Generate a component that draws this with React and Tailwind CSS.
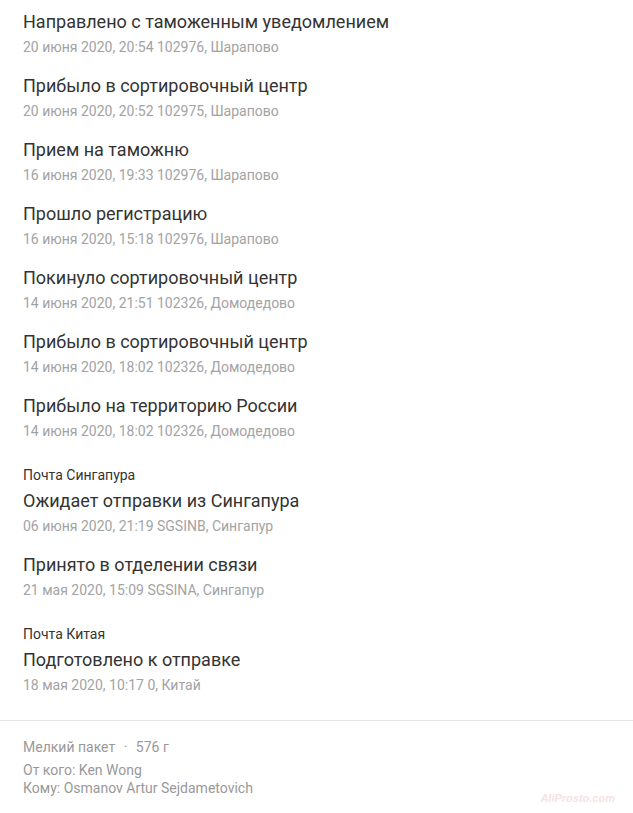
const groups = [
  {
    carrier: null,
    events: [
      { title: "Направлено с таможенным уведомлением", meta: "20 июня 2020, 20:54 102976, Шарапово" },
      { title: "Прибыло в сортировочный центр", meta: "20 июня 2020, 20:52 102975, Шарапово" },
      { title: "Прием на таможню", meta: "16 июня 2020, 19:33 102976, Шарапово" },
      { title: "Прошло регистрацию", meta: "16 июня 2020, 15:18 102976, Шарапово" },
      { title: "Покинуло сортировочный центр", meta: "14 июня 2020, 21:51 102326, Домодедово" },
      { title: "Прибыло в сортировочный центр", meta: "14 июня 2020, 18:02 102326, Домодедово" },
      { title: "Прибыло на территорию России", meta: "14 июня 2020, 18:02 102326, Домодедово" },
    ],
  },
  {
    carrier: "Почта Сингапура",
    events: [
      { title: "Ожидает отправки из Сингапура", meta: "06 июня 2020, 21:19 SGSINB, Сингапур" },
      { title: "Принято в отделении связи", meta: "21 мая 2020, 15:09 SGSINA, Сингапур" },
    ],
  },
  {
    carrier: "Почта Китая",
    events: [
      { title: "Подготовлено к отправке", meta: "18 мая 2020, 10:17 0, Китай" },
    ],
  },
];

export default function App() {
  return (
    <div className="relative min-h-[813px] w-[633px] bg-white font-['Roboto',sans-serif]">
      {/* Tracking history */}
      <div className="px-[23px] pt-[10px]">
        {groups.map((group, gi) => (
          <div key={gi} className={gi > 0 ? "mt-[25px]" : ""}>
            {group.carrier && (
              <p className="text-[14px] leading-[18px] text-[#333] mb-[5px]">{group.carrier}</p>
            )}
            <div className="flex flex-col gap-[17px]">
              {group.events.map((ev, i) => (
                <div key={i} className="flex flex-col gap-[3px]">
                  <p className="text-[18px] leading-[24px] text-[#333]">{ev.title}</p>
                  <p className="text-[14px] leading-[20px] text-[#a3a3a3]">{ev.meta}</p>
                </div>
              ))}
            </div>
          </div>
        ))}
      </div>

      {/* Parcel info */}
      <div className="mt-[25px] border-t border-[#e6e6e6] px-[23px] pt-[17px] text-[14px] text-[#999]">
        <p className="leading-[18px]">
          Мелкий пакет <span className="mx-[5px]">·</span> 576 г
        </p>
        <div className="mt-[5px] leading-[18px]">
          <p>От кого: Ken Wong</p>
          <p>Кому: Osmanov Artur Sejdametovich</p>
        </div>
      </div>

      <span className="absolute right-[18px] top-[790px] text-[11px] italic font-bold text-[#f8e2e2] font-['Liberation_Sans',sans-serif]">
        AliProsto.com
      </span>
    </div>
  );
}
